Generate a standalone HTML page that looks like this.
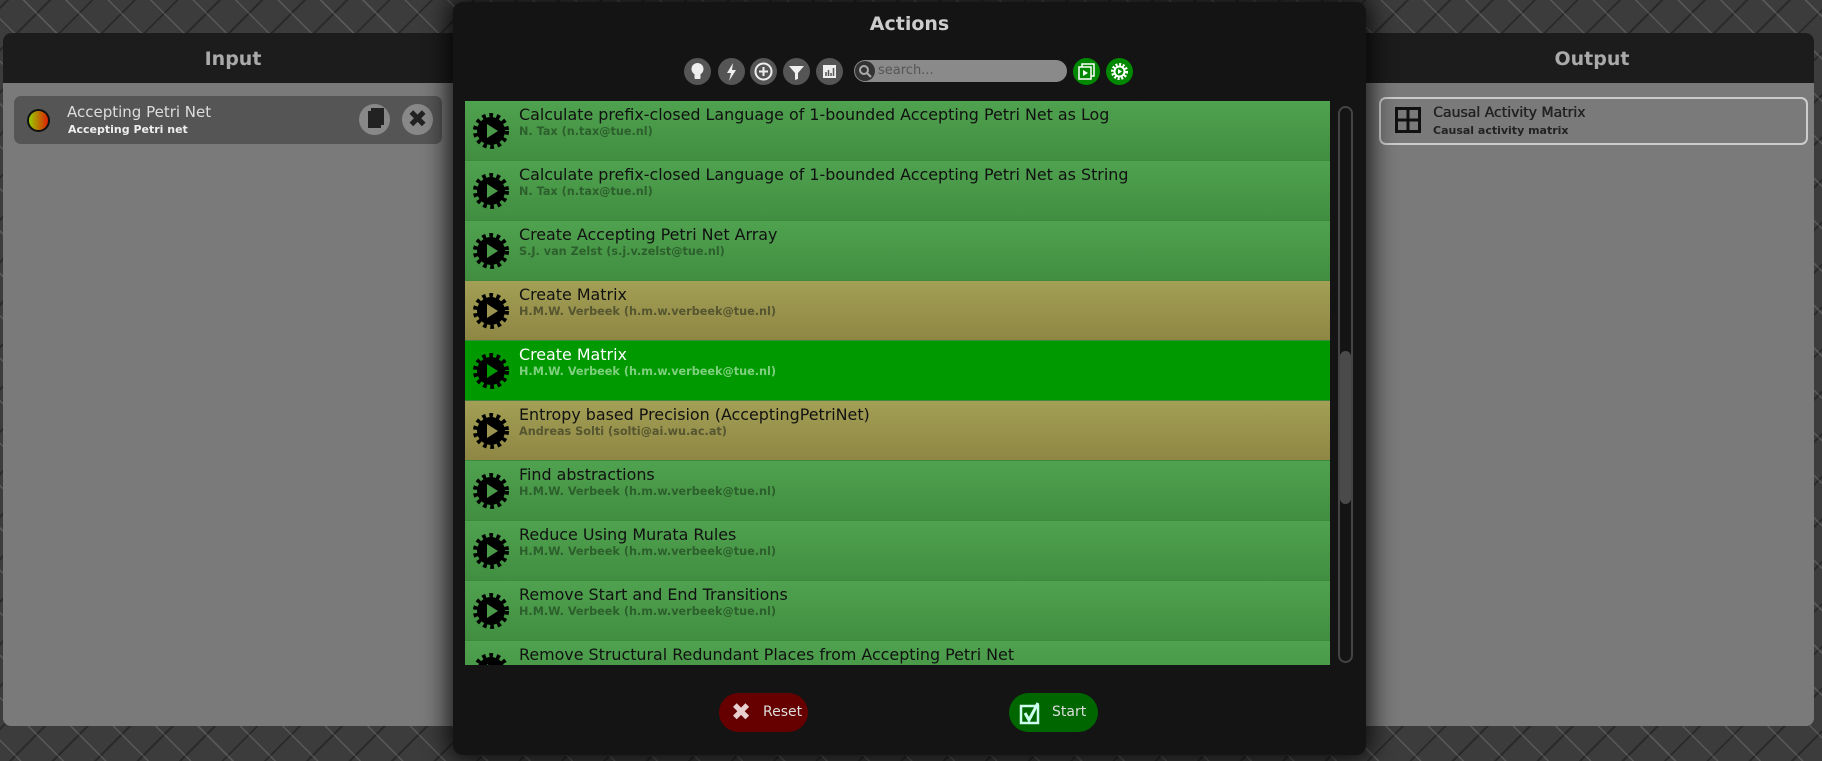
<!DOCTYPE html>
<html><head><meta charset="utf-8">
<style>
*{box-sizing:border-box;margin:0;padding:0}
body{width:1822px;height:761px;overflow:hidden;position:relative;font-family:"DejaVu Sans","Liberation Sans",sans-serif;
background:#3c3c3c;
background-image:repeating-linear-gradient(45deg,transparent 0 14px,rgba(190,190,190,.22) 14px 15.5px,transparent 15.5px 30px),repeating-linear-gradient(-45deg,transparent 0 20px,rgba(0,0,0,.3) 20px 22px,transparent 22px 30px);}
.panel{position:absolute;top:33px;height:693px;background:#7a7a7a;border-radius:8px;overflow:hidden}
.panel .hd{height:50px;background:#1c1c1c;color:#aaa;font-weight:bold;font-size:19px;text-align:center;line-height:52px}
#inp{left:3px;width:460px}
#out{left:1356px;width:458px}
.item{position:absolute;border-radius:7px;height:48px}
.t1{position:absolute;font-size:15px;color:#ddd}
.t2{position:absolute;font-size:11px;font-weight:bold}
#modal{position:absolute;left:453px;top:2px;width:913px;height:753px;background:#141414;border-radius:10px;box-shadow:0 0 25px 5px rgba(0,0,0,.8)}
#modal h1{font-size:19px;color:#ccc;text-align:center;margin-top:11px;font-weight:bold}
.ic{position:absolute;top:56px;width:27px;height:27px;border-radius:50%;background:#555}
.ic svg{position:absolute;left:0;top:0}
#search{position:absolute;left:401px;top:58px;width:213px;height:22px;border-radius:11px;background:#8a8a8a;color:#555;font-size:13px;line-height:22px;padding-left:24px}
#list{position:absolute;left:12px;top:99px;width:865px;height:564px;overflow:hidden;background:#4a9a4a}
.row{height:60px;position:relative;border-bottom:1px solid #3d8a3d}
.g{background:linear-gradient(#4fa24f,#418e41)}
.o{background:linear-gradient(#a39f55,#8e8744)}
.s{background:#009900}
.row .tt{position:absolute;left:54px;top:4px;font-size:15.9px;color:#111}
.row .au{position:absolute;left:54px;top:24px;font-size:11.25px;font-weight:bold;color:#2d5f2d}
.o .au{color:#555530}
.s .tt{color:#fff}.s .au{color:#7fd07f}
.row svg{position:absolute;left:6px;top:10px}
.btn{position:absolute;top:691px;height:39px;border-radius:20px;color:#ddd;font-size:14px;line-height:39px}
</style></head><body>
<div class="panel" id="inp"><div class="hd">Input</div>
<div class="item" style="left:11px;top:63px;width:428px;background:#555">
<div style="position:absolute;left:13px;top:13px;width:23px;height:23px;border-radius:50%;border:2px solid #111;background:linear-gradient(90deg,#9c0,#d20)"></div>
<div class="t1" style="left:53px;top:7px">Accepting Petri Net</div>
<div class="t2" style="left:54px;top:27px;color:#eee">Accepting Petri net</div>
<div style="position:absolute;left:345px;top:8px;width:31px;height:31px;border-radius:50%;background:#888"><div style="position:absolute;left:9px;top:7px;width:13px;height:17px;background:#222;box-shadow:3px -3px 0 #222"></div></div>
<div style="position:absolute;left:388px;top:8px;width:31px;height:31px;border-radius:50%;background:#888;color:#222;font-size:24px;text-align:center;line-height:31px;font-weight:bold">✖</div>
</div></div>
<div class="panel" id="out"><div class="hd" style="padding-left:14px">Output</div>
<div class="item" style="left:23px;top:64px;width:429px;border:2px solid #ccc">
<svg style="position:absolute;left:14px;top:8px" width="26" height="26"><rect x="1.5" y="1.5" width="23" height="23" fill="none" stroke="#111" stroke-width="3"/><path d="M13 1v24M1 13h24" stroke="#111" stroke-width="3"/></svg>
<div class="t1" style="left:52px;top:6px;color:#222;font-size:14px;text-shadow:0.5px 0 0 #222">Causal Activity Matrix</div>
<div class="t2" style="left:52px;top:25px;color:#222">Causal activity matrix</div>
</div></div>
<div id="modal"><h1>Actions</h1>
<div class="ic" style="left:231px"><svg width="27" height="27"><circle cx="13.5" cy="11" r="6" fill="#eee"/><rect x="10.5" y="15" width="6" height="6" rx="1" fill="#eee"/></svg></div>
<div class="ic" style="left:265px"><svg width="27" height="27"><path d="M15 5l-6 10h4l-2 8 7-11h-4z" fill="#eee"/></svg></div>
<div class="ic" style="left:297px"><svg width="27" height="27"><circle cx="13.5" cy="13.5" r="8" fill="none" stroke="#eee" stroke-width="2"/><path d="M13.5 9v9M9 13.5h9" stroke="#eee" stroke-width="2"/></svg></div>
<div class="ic" style="left:330px"><svg width="27" height="27"><path d="M6 8h15l-6 7v6l-3 1v-7z" fill="#eee"/></svg></div>
<div class="ic" style="left:363px"><svg width="27" height="27"><rect x="7" y="7" width="13" height="13" fill="#eee"/><path d="M10 18v-4M12.5 18v-6M15 18v-3M17.5 18v-8" stroke="#555" stroke-width="1.5"/></svg></div>
<div id="search"><span style="position:absolute;left:1px;top:1px;width:20px;height:20px;border-radius:50%;background:#333"></span><svg style="position:absolute;left:4px;top:4px" width="14" height="14"><circle cx="6" cy="6" r="4" fill="none" stroke="#aaa" stroke-width="2"/><path d="M9 9l4 4" stroke="#aaa" stroke-width="2"/></svg>search...</div>
<div class="ic" style="left:620px;background:#080"><svg width="27" height="27"><rect x="9" y="6" width="12" height="12" fill="none" stroke="#fff" stroke-width="1.5"/><rect x="6" y="9" width="12" height="12" fill="#080" stroke="#fff" stroke-width="1.5"/><path d="M10 12v6l5-3z" fill="#fff"/></svg></div>
<div class="ic" style="left:653px;background:#080"><svg width="27" height="27"><circle cx="13.5" cy="13.5" r="7" fill="none" stroke="#fff" stroke-width="3" stroke-dasharray="2 1.6"/><circle cx="13.5" cy="13.5" r="6" fill="#fff"/><circle cx="13.5" cy="13.5" r="4" fill="#080"/><path d="M12 11v5l4-2.5z" fill="#fff"/></svg></div>
<div id="list">
<div class="row g"><svg width="40" height="40"><circle cx="20" cy="20" r="15" fill="none" stroke="#000" stroke-width="6" stroke-dasharray="3.5 3.4"/><circle cx="20" cy="20" r="14" fill="#000"/><path d="M16 13v14l11-7z" fill="#4a9a4a"/></svg><div class="tt">Calculate prefix-closed Language of 1-bounded Accepting Petri Net as Log</div><div class="au">N. Tax (n.tax@tue.nl)</div></div>
<div class="row g"><svg width="40" height="40"><circle cx="20" cy="20" r="15" fill="none" stroke="#000" stroke-width="6" stroke-dasharray="3.5 3.4"/><circle cx="20" cy="20" r="14" fill="#000"/><path d="M16 13v14l11-7z" fill="#4a9a4a"/></svg><div class="tt">Calculate prefix-closed Language of 1-bounded Accepting Petri Net as String</div><div class="au">N. Tax (n.tax@tue.nl)</div></div>
<div class="row g"><svg width="40" height="40"><circle cx="20" cy="20" r="15" fill="none" stroke="#000" stroke-width="6" stroke-dasharray="3.5 3.4"/><circle cx="20" cy="20" r="14" fill="#000"/><path d="M16 13v14l11-7z" fill="#4a9a4a"/></svg><div class="tt">Create Accepting Petri Net Array</div><div class="au">S.J. van Zelst (s.j.v.zelst@tue.nl)</div></div>
<div class="row o"><svg width="40" height="40"><circle cx="20" cy="20" r="15" fill="none" stroke="#000" stroke-width="6" stroke-dasharray="3.5 3.4"/><circle cx="20" cy="20" r="14" fill="#000"/><path d="M16 13v14l11-7z" fill="#9a9450"/></svg><div class="tt">Create Matrix</div><div class="au">H.M.W. Verbeek (h.m.w.verbeek@tue.nl)</div></div>
<div class="row s"><svg width="40" height="40"><circle cx="20" cy="20" r="15" fill="none" stroke="#000" stroke-width="6" stroke-dasharray="3.5 3.4"/><circle cx="20" cy="20" r="14" fill="#000"/><path d="M16 13v14l11-7z" fill="#009900"/></svg><div class="tt">Create Matrix</div><div class="au">H.M.W. Verbeek (h.m.w.verbeek@tue.nl)</div></div>
<div class="row o"><svg width="40" height="40"><circle cx="20" cy="20" r="15" fill="none" stroke="#000" stroke-width="6" stroke-dasharray="3.5 3.4"/><circle cx="20" cy="20" r="14" fill="#000"/><path d="M16 13v14l11-7z" fill="#9a9450"/></svg><div class="tt">Entropy based Precision (AcceptingPetriNet)</div><div class="au">Andreas Solti (solti@ai.wu.ac.at)</div></div>
<div class="row g"><svg width="40" height="40"><circle cx="20" cy="20" r="15" fill="none" stroke="#000" stroke-width="6" stroke-dasharray="3.5 3.4"/><circle cx="20" cy="20" r="14" fill="#000"/><path d="M16 13v14l11-7z" fill="#4a9a4a"/></svg><div class="tt">Find abstractions</div><div class="au">H.M.W. Verbeek (h.m.w.verbeek@tue.nl)</div></div>
<div class="row g"><svg width="40" height="40"><circle cx="20" cy="20" r="15" fill="none" stroke="#000" stroke-width="6" stroke-dasharray="3.5 3.4"/><circle cx="20" cy="20" r="14" fill="#000"/><path d="M16 13v14l11-7z" fill="#4a9a4a"/></svg><div class="tt">Reduce Using Murata Rules</div><div class="au">H.M.W. Verbeek (h.m.w.verbeek@tue.nl)</div></div>
<div class="row g"><svg width="40" height="40"><circle cx="20" cy="20" r="15" fill="none" stroke="#000" stroke-width="6" stroke-dasharray="3.5 3.4"/><circle cx="20" cy="20" r="14" fill="#000"/><path d="M16 13v14l11-7z" fill="#4a9a4a"/></svg><div class="tt">Remove Start and End Transitions</div><div class="au">H.M.W. Verbeek (h.m.w.verbeek@tue.nl)</div></div>
<div class="row g"><svg width="40" height="40"><circle cx="20" cy="20" r="15" fill="none" stroke="#000" stroke-width="6" stroke-dasharray="3.5 3.4"/><circle cx="20" cy="20" r="14" fill="#000"/><path d="M16 13v14l11-7z" fill="#4a9a4a"/></svg><div class="tt">Remove Structural Redundant Places from Accepting Petri Net</div><div class="au">H.M.W. Verbeek (h.m.w.verbeek@tue.nl)</div></div>
</div>
<div style="position:absolute;left:885px;top:104px;width:15px;height:557px;border:2px solid #444;border-radius:8px"></div>
<div style="position:absolute;left:887px;top:349px;width:11px;height:153px;background:#4a4a4a;border-radius:6px"></div>
<div class="btn" style="left:266px;width:89px;background:#600"><span style="position:absolute;left:12px;font-size:24px;color:#e8d0d0;font-weight:bold">✖</span><span style="position:absolute;left:44px">Reset</span></div>
<div class="btn" style="left:556px;width:89px;background:#060"><svg style="position:absolute;left:10px;top:8px" width="26" height="24"><rect x="2" y="5" width="17" height="17" fill="none" stroke="#cfe" stroke-width="2.5"/><path d="M6 12l4 7 9-17" fill="none" stroke="#cfe" stroke-width="3"/></svg><span style="position:absolute;left:43px">Start</span></div>
</div>
</body></html>
